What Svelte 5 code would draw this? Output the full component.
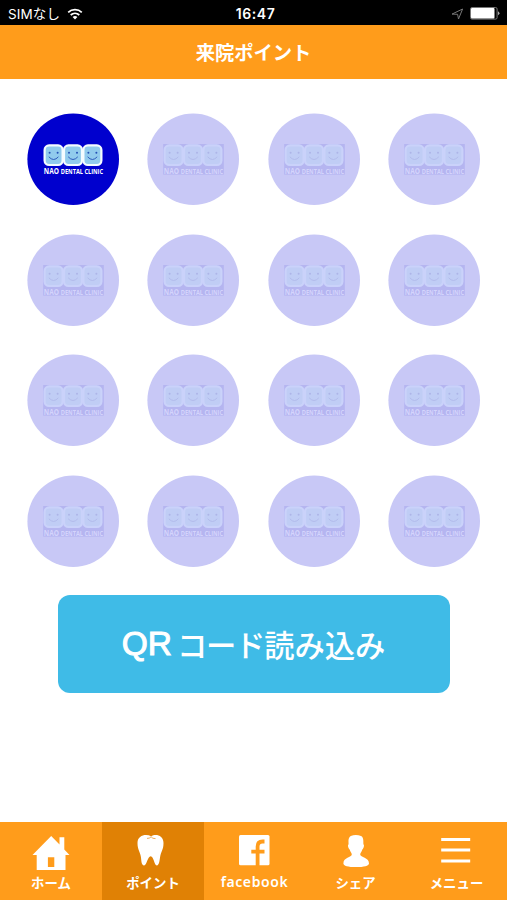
<script lang="ts">
  const total = 16;
  let count = $state(1);
  let active = $state('point');

  const tabs = [
    { id: 'home', label: 'ホーム' },
    { id: 'point', label: 'ポイント' },
    { id: 'facebook', label: 'facebook' },
    { id: 'share', label: 'シェア' },
    { id: 'menu', label: 'メニュー' },
  ];

  const stamps = Array.from({ length: total }, (_, i) => i);
  const faces = [26.6, 46, 65.4];
</script>

<div class="app">
  <div class="status">
    <div class="carrier">
      <span>SIMなし</span>
      <svg class="wifi" viewBox="0 0 16 12" width="16" height="12">
        <path d="M1.2 4.4C5 .8 11 .8 14.8 4.4M3.7 7C6.2 4.7 9.8 4.7 12.3 7" fill="none" stroke="#fff" stroke-width="1.7" />
        <path d="M5.6 8.9C7 7.8 9 7.8 10.4 8.9L8 11.4Z" fill="#fff" />
      </svg>
    </div>
    <span class="clock">16:47</span>
    <div class="indicators">
      <svg viewBox="0 0 13 12" width="13" height="12">
        <path d="M1 6.1L11.6 1L7.5 11L6.6 6.3Z" fill="none" stroke="#777" stroke-width="1" />
      </svg>
      <svg viewBox="0 0 30 13" width="30" height="13">
        <rect x=".5" y=".5" width="26.6" height="11.6" rx="1.5" fill="none" stroke="#777" />
        <rect x="1" y="1" width="23.5" height="10.6" rx="1" fill="#fff" />
        <path d="M28.2 4.3Q30.6 6.3 28.2 8.3Z" fill="#ccc" />
      </svg>
    </div>
  </div>

  <header class="header">
    <h1>来院ポイント</h1>
  </header>

  <main class="content">
    <div class="stamps">
      {#each stamps as i}
        <svg class="stamp" class:on={i < count} viewBox="0 0 92 92" width="92" height="92">
          <circle class="disc" cx="46.2" cy="46.2" r="45.8" />
          {#if i >= count}
            <rect class="plate" x="16.2" y="31" width="60.6" height="30.6" />
          {/if}
          {#each faces as x}
            <rect class="tile" x={x - 9} y="32.4" width="18" height="19.6" rx="4.5" />
            <circle class="eye" cx={x - 4} cy="39.8" r="1" />
            <circle class="eye" cx={x + 4} cy="39.8" r="1" />
            <path class="smile" d="M{x - 4.8} 43.8Q{x} 49.2 {x + 4.8} 43.8" />
          {/each}
          <text class="name" transform="translate(16.8 61) scale(.7 1)" font-size="9.4">NAO</text>
          <text class="name" transform="translate(33.8 61) scale(.77 1)" font-size="7.3">DENTAL CLINIC</text>
        </svg>
      {/each}
    </div>

    <button class="qr">
      <span class="latin">QR</span><span class="kana">コード</span><span>読み込み</span>
    </button>
  </main>

  <nav class="tabs">
    {#each tabs as tab}
      <button class="tab" class:active={active === tab.id} onclick={() => (active = tab.id)}>
        <svg viewBox="0 0 40 38" width="40" height="38">
          {#if tab.id === 'home'}
            <path fill-rule="evenodd" d="M20.2 2L1.5 21H5.7V36H34.5V21H38.5L33.3 15.5V3.2H28.5V10.4ZM16.9 23.3H23.3V33H16.9Z" />
          {:else if tab.id === 'point'}
            <path d="M18.1 2.2C22.5 -.6 30.5 1 30.5 9C30.5 16 27.9 17.6 27.1 23C26.5 27.3 26.1 31.2 23.9 31.4C21.1 31.6 20.9 22.3 17.7 22.3C14.5 22.3 13.9 31.4 11.1 31.4C8.3 31.2 8.5 27.3 7.9 23C7.1 17.4 4.5 16 4.5 9C4.5 1 13.1 -.4 18.1 2.2Z" />
            <path class="crease" d="M14 4.4Q16.5 4.6 18.1 2.8Q19.5 4.8 22.5 4.6" />
          {:else if tab.id === 'facebook'}
            <rect x="4" y="1" width="30.5" height="30.2" rx="1.5" />
            <path class="cut" d="M29.5 7.5H27.5Q22.6 7.5 22.6 12.5V32M16.3 17.6H29.5" />
          {:else if tab.id === 'share'}
            <path d="M14.8 2C18 .6 22 .8 25 2C27.6 3.4 27.4 6.4 27.4 10.2C28.8 11 27.4 14.8 26.3 15.5C25.8 18 24.3 18.8 24.2 20.5C24.4 23.6 33 23.2 33 29.4C33 31.8 28 33 20 33S7.4 31.8 7.4 29.4C7.4 23.2 15.6 23.6 15.8 20.5C15.7 18.8 14.2 18 13.7 15.5C12.6 14.8 11.2 11 12.6 10.2C12.6 7 11.8 4 14.8 2Z" />
          {:else}
            <path d="M4.2 4H33.2V7H4.2ZM4.2 14.6H33.2V17.6H4.2ZM4.2 25.4H33.2V28.4H4.2Z" />
          {/if}
        </svg>
        <span class="label {tab.id}">{tab.label}</span>
      </button>
    {/each}
  </nav>
</div>

<style>
  :global(body) {
    background: #fff;
  }

  .app {
    width: 507px;
    height: 900px;
    display: flex;
    flex-direction: column;
    overflow: hidden;
    background: #fff;
    color: #fff;
    font-family: 'Liberation Sans', 'Noto Sans CJK JP', sans-serif;
  }

  button {
    border: 0;
    margin: 0;
    color: inherit;
    font-family: inherit;
    cursor: pointer;
  }

  /* Status bar */
  .status {
    height: 25px;
    flex: none;
    box-sizing: border-box;
    padding: 2px 7px 0 8px;
    display: grid;
    grid-template-columns: 1fr auto 1fr;
    align-items: center;
    background: #000;
  }

  .carrier {
    display: flex;
    align-items: center;
    gap: 7px;
    font: 13.5px/20px Inter, 'Noto Sans CJK JP', sans-serif;
    letter-spacing: 0.1px;
  }

  .clock {
    margin-left: 3px;
    font: 600 14px/20px Inter, sans-serif;
    letter-spacing: 0.6px;
  }

  .indicators {
    display: flex;
    align-items: center;
    justify-content: flex-end;
    gap: 6px;
  }

  /* Header */
  .header {
    height: 54px;
    flex: none;
    display: flex;
    align-items: center;
    justify-content: center;
    background: #ff9c1b;
  }

  h1 {
    margin: 0;
    font: bold 19.3px/28px 'Noto Sans CJK JP', sans-serif;
  }

  /* Stamp card */
  .content {
    flex: 1;
    display: flex;
    flex-direction: column;
    align-items: center;
    padding-top: 34px;
  }

  .stamps {
    display: grid;
    grid-template-columns: repeat(4, 92px);
    gap: 28.5px;
  }

  .stamp {
    display: block;
  }

  .disc {
    fill: #c8c8f6;
  }

  .plate {
    fill: #b5b5f0;
  }

  .tile {
    fill: #c0cdf5;
    stroke: #cad2fa;
    stroke-width: 2.2;
  }

  .eye {
    fill: #adb5e8;
  }

  .smile {
    fill: none;
    stroke: #b0b9ea;
    stroke-width: 0.9;
  }

  .name {
    fill: #d4d4fc;
    font-family: 'Open Sans', sans-serif;
    font-weight: bold;
  }

  .on .disc {
    fill: #0000ce;
  }

  .on .tile {
    fill: #91cbed;
    stroke: #f4fcff;
  }

  .on .eye {
    fill: #2450b5;
  }

  .on .smile {
    stroke: #2450b5;
  }

  .on .name {
    fill: #fff;
  }

  .qr {
    width: 392px;
    height: 98px;
    margin-top: 28px;
    padding: 0;
    display: flex;
    align-items: center;
    justify-content: center;
    border-radius: 12px;
    background: #3fbbe7;
    font: 500 30.3px/44px 'Noto Sans CJK JP', sans-serif;
  }

  .latin {
    margin-right: 5px;
    font-family: 'Liberation Sans', sans-serif;
    font-size: 33.5px;
    -webkit-text-stroke: 1px #fff;
  }

  .kana {
    letter-spacing: -1.2px;
  }

  /* Tab bar */
  .tabs {
    height: 78px;
    flex: none;
    display: grid;
    grid-template-columns: 102px 102px repeat(3, 1fr);
    background: #ff9c1b;
  }

  .tab {
    padding: 12px 0 0;
    display: flex;
    flex-direction: column;
    align-items: center;
    background: none;
  }

  .tab.active {
    background: #e08105;
  }

  .tab svg {
    flex: none;
    fill: #fff;
  }

  .tab .crease {
    fill: none;
    stroke: #e9a34b;
    stroke-width: 0.9;
  }

  .tab .cut {
    fill: none;
    stroke: #ff9c1b;
    stroke-width: 3.8;
  }

  .label {
    font: bold 13.4px/20px 'Noto Sans CJK JP', sans-serif;
    white-space: nowrap;
  }

  .label.facebook {
    font-family: 'Noto Sans', sans-serif;
    font-size: 14px;
    font-weight: 600;
    letter-spacing: 0.6px;
  }
</style>
